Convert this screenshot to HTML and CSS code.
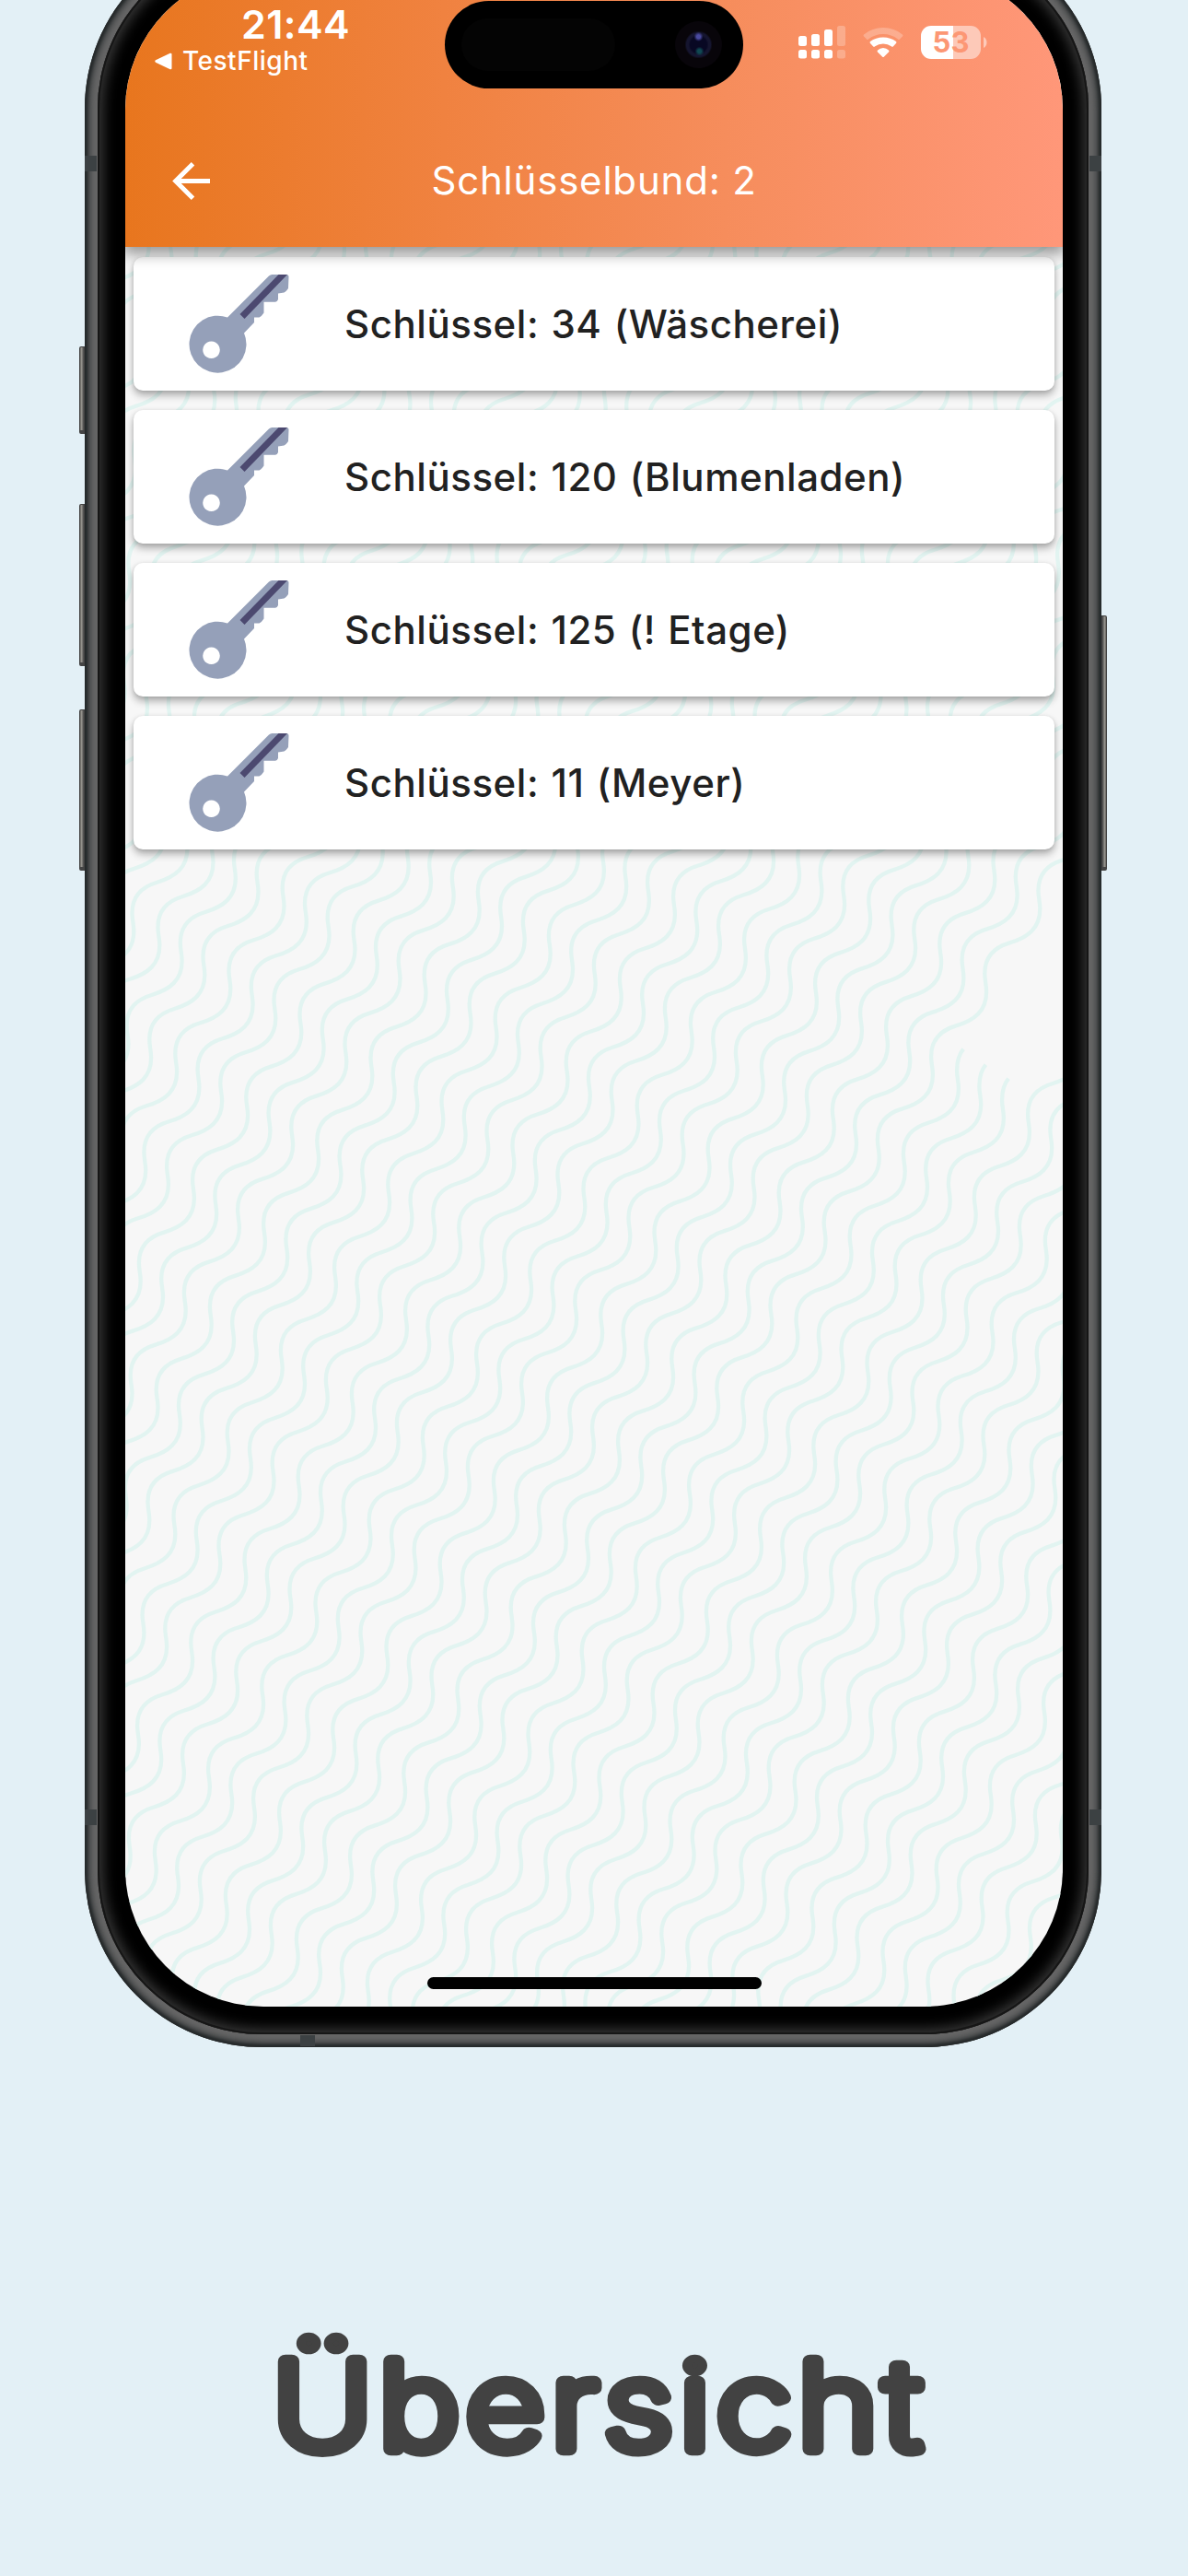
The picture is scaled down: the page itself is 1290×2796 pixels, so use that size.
FILE: index.html
```html
<!DOCTYPE html>
<html lang="de">
<head>
<meta charset="utf-8">
<title>Übersicht</title>
<link rel="stylesheet" href="styles.css">
</head>
<body>
<svg class="defs" aria-hidden="true">
  <symbol id="key" viewBox="0 0 109 107">
    <path fill="#95a0b9" fill-rule="evenodd" d="M42 46.500 87 1.500Q88.500 0 90.500 0H106Q108.500 0 108.500 2.500L108 15Q105 19.500 102 19.800L97 20.500V27Q96 29.500 94 29.700H81.500V41.500Q79 45.500 76.500 46.500H71V52L60 63.500A31 31 0 1 1 42 46.500ZM24.500 72.500a9.300 9.300 0 1 0 .01 0Z"/>
    <path fill="#4c4970" d="M97.500 0H107L60.500 48 55.500 43Z"/>
  </symbol>
</svg>
<main class="page">
  <div class="phone">
    <i class="side mute"></i><i class="side vol-up"></i><i class="side vol-down"></i><i class="side power"></i>
    <i class="seam tl"></i><i class="seam tr"></i><i class="seam bl"></i><i class="seam br"></i><i class="seam bottom"></i>
    <div class="bezel">
      <div class="screen">
        <svg class="waves" id="waves" width="1018" height="2210" viewBox="136 -31 1018 2210" aria-hidden="true"></svg>
        <header class="header">
          <div class="status">
            <div class="status-left">
              <div class="time">21:44</div>
              <div class="back-app"><svg width="19" height="19" viewBox="0 0 19 19"><path fill="#fff" d="M18.500 2v15q0 1.800-1.800 1.200L1 10.700Q-.5 9.500 1 8.300L16.700.8q1.800-.6 1.800 1.200Z"/></svg><span>TestFlight</span></div>
            </div>
            <div class="island"><i class="sensor"></i><i class="camera"></i></div>
            <div class="status-right">
              <svg width="51" height="36" viewBox="0 0 51 36" fill="#fff"><rect y="11" width="9" height="11" rx="2.500"/><rect x="14" y="9" width="9" height="13" rx="2.500"/><rect x="28" y="4" width="9" height="18" rx="2.500"/><rect x="42" width="9" height="22" rx="2.500" opacity=".25"/><rect y="26" width="9" height="9.500" rx="2.500"/><rect x="14" y="26" width="9" height="9.500" rx="2.500"/><rect x="28" y="26" width="9" height="9.500" rx="2.500"/><rect x="42" y="26" width="9" height="9.500" rx="2.500" opacity=".25"/></svg>
              <svg class="wifi" width="44" height="33" viewBox="0 0 44 33" fill="#fff"><path opacity=".25" d="M1 7.500Q10 0 22 0t21 7.500q1 1 0 2l-3 3q-1 1-2 0Q31 7 22 7T6 12.500q-1 1-2 0l-3-3q-1-1 0-2Z"/><path d="M8 15q6-4.500 14-4.500T36 15q1 1 0 2l-3 3.200q-1 1-2.200 0Q27 17.500 22 17.500t-8.800 2.700q-1.200 1-2.200 0L8 17q-1-1 0-2Z"/><path d="M16 24.500Q18.500 22 22 22t6 2.500q1 1 0 2l-5 5q-1 1-2 0l-5-5q-1-1 0-2Z"/></svg>
              <div class="battery"><span>53</span></div><svg class="nub" width="4" height="12" viewBox="0 0 4 12"><path fill="#fff" opacity=".5" d="M0 0Q3.500 2 3.500 6T0 12Z"/></svg>
            </div>
          </div>
          <div class="toolbar">
            <svg class="arrow" width="41" height="41" viewBox="0 0 41 41" fill="none" stroke="#fff" stroke-width="5"><path d="M41 20.500H4M22.500 1.800 3.700 20.500 22.500 39.200"/></svg>
            <h1>Schlüsselbund: 2</h1>
          </div>
        </header>
        <ul class="list">
          <li><svg class="key"><use href="#key"/></svg><span>Schlüssel: 34 (Wäscherei)</span></li>
          <li><svg class="key"><use href="#key"/></svg><span>Schlüssel: 120 (Blumenladen)</span></li>
          <li><svg class="key"><use href="#key"/></svg><span>Schlüssel: 125 (! Etage)</span></li>
          <li><svg class="key"><use href="#key"/></svg><span>Schlüssel: 11 (Meyer)</span></li>
        </ul>
        <i class="home"></i>
      </div>
    </div>
  </div>
  <svg class="caption" width="1290" height="200" viewBox="0 0 1290 200" role="img" aria-label="Übersicht"><text x="296" y="151.500" textLength="711" lengthAdjust="spacingAndGlyphs">Übersicht</text></svg>
</main>
<script src="waves.js"></script>
</body>
</html>
```
FILE: styles.css
```css
* { box-sizing: border-box; }
body { margin: 0; background: #e3f0f6; font-family: Inter, "Liberation Sans", sans-serif; }
.defs { position: absolute; width: 0; height: 0; }
.page { height: 2796px; overflow: hidden; display: flex; flex-direction: column; }
.phone {
  position: relative; flex: none; width: 1104px; height: 2296px; margin: -74px 0 0 92px; padding: 14px;
  border-radius: 192px; background: #666;
  box-shadow: inset 0 0 3px 3px #25292a, inset 0 0 6px 6px #3c3f40;
}
.bezel {
  height: 100%; padding: 29px 28px 30px 30px; border-radius: 178px; background: #000;
  box-shadow: inset 0 0 0 2px #161616, inset 0 0 14px 6px #383838;
}
.screen { position: relative; height: 2209px; border-radius: 150px; overflow: hidden; background: #f7f7f7; display: flex; flex-direction: column; }
.waves { position: absolute; inset: 0; fill: none; stroke: #e2f4f1; stroke-width: 4.300; }

.side { position: absolute; width: 6px; border-radius: 2px 0 0 2px; border: 1px solid #444; border-bottom: 4px solid #444; background: linear-gradient(90deg, #66645f, #96948e 40%, #444); left: -6px; }
.mute { top: 450px; height: 95px; }
.vol-up { top: 621px; height: 176px; }
.vol-down { top: 844px; height: 175px; }
.power { top: 742px; height: 277px; left: auto; right: -6px; transform: scaleX(-1); }
.seam { position: absolute; background: #3c4143; width: 13px; height: 17px; }
.tl { left: 0; top: 243px; } .tr { right: 0; top: 243px; }
.bl { left: 0; bottom: 241px; } .br { right: 0; bottom: 241px; }
.bottom { left: 234px; bottom: 1px; width: 16px; height: 12px; }

.header { position: relative; flex: none; height: 299px; padding-top: 31px; color: #fff; background: linear-gradient(90deg, #e8761e, #f08240 34%, #f68d5c 64%, #ff9779); box-shadow: 0 6px 14px 2px rgba(0,0,0,.38); z-index: 1; }
.status { display: flex; height: 97px; }
.status-left { width: 347px; padding: 3px 0 0 32px; }
.time { padding-left: 94px; font-size: 43px; line-height: 46px; font-weight: 600; letter-spacing: .4px; }
.back-app { display: flex; align-items: center; gap: 11px; font-size: 28px; line-height: 34px; font-weight: 500; letter-spacing: .5px; }
.island { display: flex; align-items: center; width: 324px; height: 95px; margin-top: 1px; border-radius: 48px; background: #000; padding: 0 23px 0 18px; justify-content: space-between; }
.sensor { width: 167px; height: 57px; border-radius: 29px; background: #040404; }
.camera { width: 51px; height: 51px; border-radius: 50%; background: radial-gradient(circle at 50% 33%, #4a4aa0 0 2px, transparent 5px), radial-gradient(circle at 52% 64%, #104852 0 2px, transparent 5px), radial-gradient(circle, #080823 0 9px, #15152f 11px 13px, #08050a 15px); }
.status-right { display: flex; align-items: flex-start; padding: 28px 0 0 60px; }
.wifi { margin: 2px 0 0 19px; }
.battery { width: 65px; height: 36px; margin-left: 19px; border-radius: 11px; background: linear-gradient(90deg, #fff 0 35px, #fdc9b8 35px); color: #fc9774; font-size: 31px; line-height: 36px; font-weight: 700; text-align: center; }
.nub { margin: 12px 0 0 3px; }
.toolbar { display: grid; grid-template-columns: 93px 1fr 93px; align-items: center; height: 136px; margin-top: 31px; }
.arrow { margin-left: 51px; }
h1 { margin: 0; text-align: center; font-size: 42px; line-height: 50px; font-weight: 430; letter-spacing: .8px; }

.list { position: relative; list-style: none; margin: 0; padding: 11px 9px 0; display: flex; flex-direction: column; gap: 21px; }
.list li { display: flex; align-items: center; height: 145px; padding-left: 60px; border-radius: 10px; background: #fff; box-shadow: 0 5px 8px rgba(0,0,0,.3), 0 1px 4px rgba(0,0,0,.1); color: #212121; font-size: 42px; letter-spacing: .55px; word-spacing: 1.500px; font-weight: 460; }
.key { width: 109px; height: 107px; margin-right: 60px; flex: none; }
.home { width: 363px; height: 13px; border-radius: 7px; background: #000; margin: auto auto 19px; position: relative; }

.caption { flex: none; margin-top: 284px; font: 200 131px Inter, sans-serif; letter-spacing: 6px; fill: #424242; stroke: #424242; stroke-width: 14.500; stroke-linejoin: round; stroke-linecap: round; }
```
FILE: waves.js
```js
// Fill the screen background with diagonal wavy lines, in groups of three.
const svg = document.getElementById("waves");
const period = "c0-17 10-28 27-33c20-6 33-16 33-37c0-8-2-13-1.800-20";
const rise = { x: 58.200, y: -90 }, group = { x: 77, y: 47.300 };
const offsets = [[0, 0], [24.300, 17], [49, 32]];
let d = "";
for (let g = -20; g < 34; g++) {
  for (const [ox, oy] of offsets) {
    const x = 306.700 + g * group.x + ox - 26 * rise.x;
    const y = 963.300 + g * group.y + oy - 26 * rise.y;
    // one group breaks off early and leaves a bare patch at the right edge
    d += `M${x} ${y}` + (g === 8 ? period.repeat(28) + "c0-10 2-17 7-23" : period.repeat(50));
  }
}
svg.innerHTML = `<path d="${d}"/>`;
```
